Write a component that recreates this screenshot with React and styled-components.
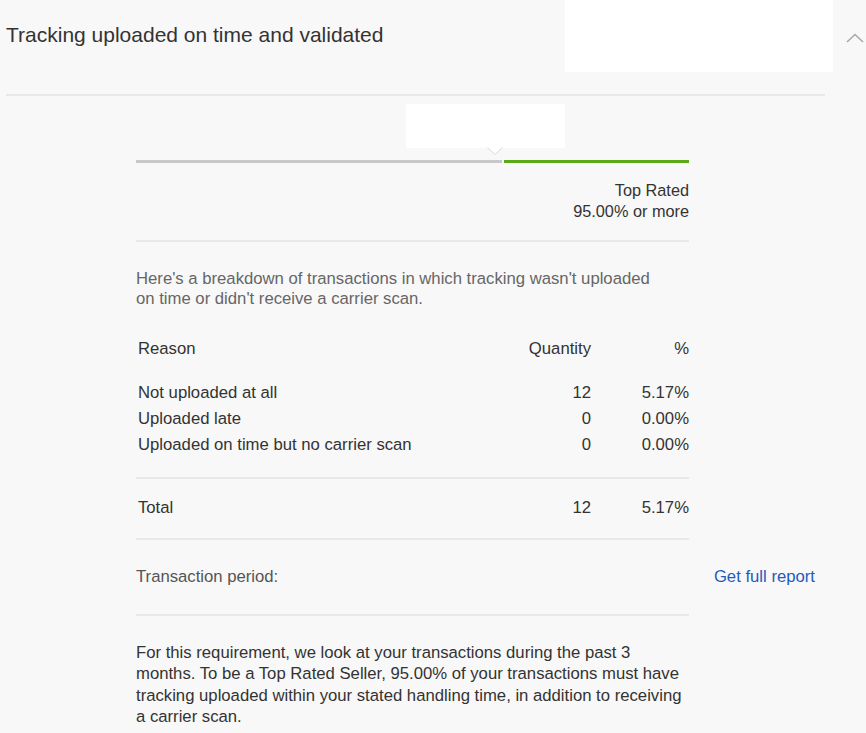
import React from "react";
import styled, { createGlobalStyle } from "styled-components";

const GlobalStyle = createGlobalStyle`
  html, body {
    margin: 0;
    padding: 0;
    background: #f8f8f8;
  }
  body {
    font-family: "Liberation Sans", Arial, sans-serif;
    color: #333;
  }
`;

const rows = [
  { reason: "Not uploaded at all", qty: 12, pct: "5.17%" },
  { reason: "Uploaded late", qty: 0, pct: "0.00%" },
  { reason: "Uploaded on time but no carrier scan", qty: 0, pct: "0.00%" },
];

const App = () => {
  return (
    <Page>
      <GlobalStyle />
      <Header>
        <Title>Tracking uploaded on time and validated</Title>
        <Chevron width="18" height="10" viewBox="0 0 18 10">
          <polyline points="1,9 9,1.5 17,9" fill="none" stroke="#a9a9a9" strokeWidth="1.6" />
        </Chevron>
        <Redaction />
      </Header>
      <TopRule />
      <Content>
        <Meter>
          <Tooltip />
          <TooltipArrow width="16" height="9" viewBox="0 0 16 9">
            <polyline points="0.5,0.5 8,7.5 15.5,0.5" fill="#fff" stroke="#d9d9d9" strokeWidth="1" />
          </TooltipArrow>
          <Bar>
            <Segment $color="#c8c8c8" $grow={366} />
            <Segment $color="#5ba818" $grow={185} />
          </Bar>
          <Level>
            <div>Top Rated</div>
            <div>95.00% or more</div>
          </Level>
        </Meter>
        <Rule $top={18} />
        <Intro>
          Here's a breakdown of transactions in which tracking wasn't uploaded
          on time or didn't receive a carrier scan.
        </Intro>
        <TableHead>
          <Cell>Reason</Cell>
          <Cell $num>Quantity</Cell>
          <Cell $num>%</Cell>
        </TableHead>
        <TableBody>
          {rows.map((r) => (
            <TableRow key={r.reason}>
              <Cell>{r.reason}</Cell>
              <Cell $num>{r.qty}</Cell>
              <Cell $num>{r.pct}</Cell>
            </TableRow>
          ))}
        </TableBody>
        <Rule $top={19} />
        <TotalRow>
          <Cell>Total</Cell>
          <Cell $num>12</Cell>
          <Cell $num>5.17%</Cell>
        </TotalRow>
        <Rule $top={17} />
        <PeriodRow>
          <PeriodLabel>Transaction period:</PeriodLabel>
          <ReportLink href="#">Get full report</ReportLink>
        </PeriodRow>
        <Rule $top={24} />
        <Footnote>
          For this requirement, we look at your transactions during the past 3
          months. To be a Top Rated Seller, 95.00% of your transactions must
          have tracking uploaded within your stated handling time, in addition
          to receiving a carrier scan.
        </Footnote>
      </Content>
    </Page>
  );
};

export default App;

const Page = styled.div`
  width: 866px;
  height: 733px;
  overflow: hidden;
  background: #f8f8f8;
`;

const Header = styled.div`
  position: relative;
  display: flex;
  justify-content: space-between;
  align-items: flex-start;
  height: 94px;
  box-sizing: border-box;
  padding: 23px 2px 0 6px;
`;

const Title = styled.div`
  font-size: 21px;
  line-height: 24px;
  color: #333;
`;

const Chevron = styled.svg`
  margin-top: 10px;
`;

const Redaction = styled.div`
  position: absolute;
  left: 565px;
  top: 0;
  width: 268px;
  height: 72px;
  background: #fff;
`;

const TopRule = styled.div`
  margin: 0 41px 0 6px;
  height: 2px;
  background: #e8e8e8;
`;

const Content = styled.div`
  margin-left: 136px;
  width: 553px;
  font-size: 16.7px;
`;

const Meter = styled.div`
  position: relative;
  padding-top: 64px;
`;

const Tooltip = styled.div`
  position: absolute;
  left: 270px;
  top: 8px;
  width: 159px;
  height: 44px;
  background: #fff;
`;

const TooltipArrow = styled.svg`
  position: absolute;
  left: 351px;
  top: 51px;
`;

const Bar = styled.div`
  display: flex;
  gap: 2px;
  height: 3px;
`;

const Segment = styled.div`
  flex: ${(p) => p.$grow} 0 0;
  background: ${(p) => p.$color};
`;

const Level = styled.div`
  margin-top: 17px;
  text-align: right;
  font-size: 16.3px;
  line-height: 21px;
  color: #333;
`;

const Rule = styled.div`
  margin-top: ${(p) => p.$top}px;
  height: 2px;
  background: #e8e8e8;
`;

const Intro = styled.p`
  margin: 27px 0 0;
  max-width: 530px;
  line-height: 20px;
  color: #666;
`;

const gridCols = `
  display: grid;
  grid-template-columns: 1fr 110px 98px;
  line-height: 26px;
  color: #333;
`;

const TableHead = styled.div`
  ${gridCols}
  margin-top: 27px;
  padding-left: 2px;
`;

const TableBody = styled.div`
  margin-top: 18px;
  padding-left: 2px;
`;

const TableRow = styled.div`
  ${gridCols}
`;

const TotalRow = styled.div`
  ${gridCols}
  margin-top: 16px;
  padding-left: 2px;
`;

const Cell = styled.div`
  text-align: ${(p) => (p.$num ? "right" : "left")};
  white-space: nowrap;
`;

const PeriodRow = styled.div`
  display: flex;
  justify-content: space-between;
  width: 679px;
  margin-top: 24px;
  line-height: 26px;
`;

const PeriodLabel = styled.span`
  color: #555;
`;

const ReportLink = styled.a`
  color: #1f5bc1;
  text-decoration: none;
`;

const Footnote = styled.p`
  margin: 26px 0 0;
  line-height: 21.4px;
  color: #333;
`;
